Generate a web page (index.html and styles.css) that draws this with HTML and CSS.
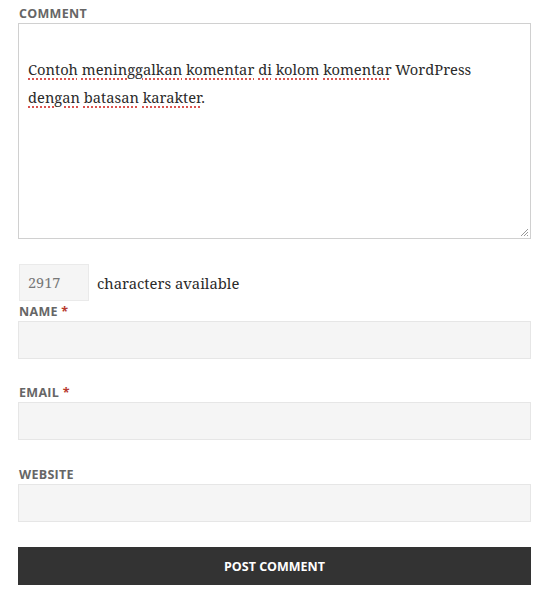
FILE: index.html
```html
<!DOCTYPE html>
<html>
<head>
<meta charset="utf-8">
<link rel="stylesheet" href="styles.css">
</head>
<body>
<form class="comment-form">
  <div class="field field-comment">
    <label class="label">Comment</label>
    <div class="textarea">
      <p class="typed"><span class="sp">Contoh</span> <span class="sp">meninggalkan</span> <span class="sp">komentar</span> <span class="sp">di</span> <span class="sp">kolom</span> <span class="sp">komentar</span> WordPress <span class="sp">dengan</span> <span class="sp">batasan</span> <span class="sp">karakter</span>.</p>
      <svg class="grip" width="9" height="9" viewBox="0 0 9 9"><path d="M8 1 L1 8 M8 4 L4 8 M8 7 L7 8" stroke="#999" stroke-width="1"/></svg>
    </div>
  </div>
  <div class="counter">
    <span class="count">2917</span>
    <span class="count-text">characters available</span>
  </div>
  <div class="field">
    <label class="label">Name <span class="req">*</span></label>
    <div class="input"></div>
  </div>
  <div class="field">
    <label class="label">Email <span class="req">*</span></label>
    <div class="input"></div>
  </div>
  <div class="field field-website">
    <label class="label">Website</label>
    <div class="input"></div>
  </div>
  <div class="submit">Post Comment</div>
</form>
</body>
</html>
```
FILE: styles.css
```css
* { box-sizing: border-box; }
body {
  margin: 0;
  background: #fff;
  font-family: "Noto Serif", "DejaVu Serif", serif;
}
.comment-form {
  display: flex;
  flex-direction: column;
  padding: 7px 19px 0 18px;
  width: 550px;
}
.label {
  display: block;
  font-family: "Open Sans", sans-serif;
  font-weight: 700;
  font-size: 12.5px;
  line-height: 14px;
  color: #666;
  text-transform: uppercase;
  letter-spacing: 0.3px;
  padding-left: 1px;
  margin-bottom: 2px;
}
.req { color: #b83a2e; }
.textarea {
  position: relative;
  height: 216px;
  border: 1px solid #d0d0d0;
  background: #fff;
  padding: 31px 30px 0 9px;
}
.typed {
  margin: 0;
  font-family: "Noto Serif", serif;
  font-size: 14.7px;
  line-height: 28px;
  color: #2b2b2b;
}
.sp {
  text-decoration: underline dotted #d9534f;
  text-decoration-thickness: 1.5px;
  text-underline-offset: 3px;
}
.grip {
  position: absolute;
  right: 1px;
  bottom: 1px;
}
.counter {
  display: flex;
  align-items: center;
  margin-top: 25px;
  gap: 8px;
}
.count {
  display: block;
  width: 70px;
  height: 37px;
  margin-left: 1px;
  background: #f5f5f5;
  border: 1px solid #eaeaea;
  padding: 0 8px;
  font-size: 14.5px;
  line-height: 35px;
  color: #777;
  font-family: "Noto Serif", serif;
}
.count-text {
  font-size: 14.8px;
  color: #2b2b2b;
  font-family: "Noto Serif", serif;
}
.field { display: flex; flex-direction: column; }
.counter + .field { margin-top: 4px; }
.field + .field { margin-top: 27px; }
.field + .field-website { margin-top: 28px; }
.input {
  height: 38px;
  background: #f5f5f5;
  border: 1px solid #e6e6e6;
}
.submit {
  margin-top: 25px;
  height: 38px;
  background: #333;
  color: #fff;
  font-family: "Open Sans", sans-serif;
  font-weight: 700;
  font-size: 12.5px;
  text-transform: uppercase;
  display: flex;
  align-items: center;
  justify-content: center;
}
```
